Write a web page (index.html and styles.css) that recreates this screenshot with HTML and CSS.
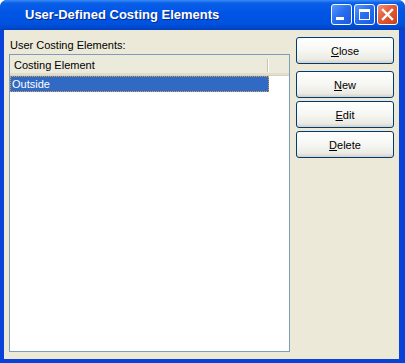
FILE: index.html
```html
<!DOCTYPE html>
<html lang="en">
<head>
    <meta charset="UTF-8">
    <title>User-Defined Costing Elements</title>
    <link rel="stylesheet" href="styles.css">
</head>
<body>
    <div class="window">
        <div class="titlebar">
            <div class="title">User-Defined Costing Elements</div>
            <div class="controls">
                <div class="ctl ctl-min"><span class="min-bar"></span></div>
                <div class="ctl ctl-max"><span class="max-box"></span></div>
                <div class="ctl ctl-close">
                    <svg width="13" height="13" viewBox="0 0 13 13">
                        <path d="M2 2 L11 11 M11 2 L2 11" stroke="#fff" stroke-width="2.4" stroke-linecap="square"/>
                    </svg>
                </div>
            </div>
        </div>

        <div class="content">
            <div class="left">
                <div class="label">User Costing Elements:</div>
                <div class="listbox">
                    <div class="header">
                        <div class="col">Costing Element</div>
                        <div class="col-rest"></div>
                    </div>
                    <div class="row selected">Outside</div>
                </div>
            </div>
            <div class="buttons">
                <button class="btn btn-first"><u>C</u>lose</button>
                <button class="btn"><u>N</u>ew</button>
                <button class="btn"><u>E</u>dit</button>
                <button class="btn"><u>D</u>elete</button>
            </div>
        </div>
    </div>
</body>
</html>
```

FILE: styles.css
```css
* {
    margin: 0;
    padding: 0;
    box-sizing: border-box;
}

body {
    width: 405px;
    height: 363px;
    background: #fff;
    font-family: "Liberation Sans", Arial, sans-serif;
    font-size: 11px;
    overflow: hidden;
}

.window {
    width: 405px;
    height: 363px;
    display: flex;
    flex-direction: column;
    background: #0842d8;
    border-radius: 7px 7px 0 0;
    overflow: hidden;
}

.titlebar {
    height: 30px;
    flex: none;
    display: flex;
    align-items: center;
    justify-content: space-between;
    padding: 0 7px 0 25px;
    background: linear-gradient(to bottom, #3b8cf5 0, #0a5fe8 3px, #0055e6 12px, #0052de 24px, #0048cc 28px, #0040b8 30px);
}

.title {
    color: #fff;
    font-family: "Liberation Sans", Arial, sans-serif;
    font-weight: bold;
    font-size: 13px;
    text-shadow: 1px 1px 0 #0a2a8a;
    padding-bottom: 2px;
}

.controls {
    display: flex;
    gap: 2px;
    padding-bottom: 1px;
}

.ctl {
    width: 21px;
    height: 21px;
    border: 1px solid #fff;
    border-radius: 3px;
    display: flex;
    align-items: center;
    justify-content: center;
    background: linear-gradient(135deg, #5a97ff 0%, #2a6ff0 45%, #1a58e0 100%);
}

.ctl-close {
    background: linear-gradient(135deg, #f0917a 0%, #e35a36 45%, #c8401c 100%);
}

.min-bar {
    width: 8px;
    height: 3px;
    background: #fff;
    margin-top: 8px;
    margin-right: 4px;
}

.max-box {
    width: 11px;
    height: 11px;
    border: 1px solid #fff;
    border-top-width: 3px;
}

.content {
    flex: 1;
    display: flex;
    gap: 6px;
    margin: 0 6px 4px 4px;
    background: #ece9d8;
    padding: 7px 5px 7px 5px;
}

.left {
    flex: 1;
    display: flex;
    flex-direction: column;
}

.label {
    height: 17px;
    padding: 2px 0 0 1px;
    color: #000;
}

.listbox {
    flex: 1;
    background: #fff;
    border: 1px solid #7f9db9;
}

.header {
    height: 21px;
    display: flex;
    background: #ebeadb;
    border-bottom: 1px solid #d6d2c2;
    box-shadow: inset 0 -2px 0 #e2decd;
}

.col {
    width: 259px;
    padding: 4px 0 0 4px;
    position: relative;
    color: #000;
}

.col::after {
    content: '';
    position: absolute;
    right: 0;
    top: 4px;
    height: 13px;
    border-left: 1px solid #c7c5b2;
    border-right: 1px solid #fff;
}

.col-rest {
    flex: 1;
}

.row {
    width: 259px;
    height: 16px;
    line-height: 14px;
    padding-left: 1px;
    color: #000;
}

.selected {
    background: #316ac5;
    color: #fff;
    border: 1px dotted #e0a040;
}

.buttons {
    width: 98px;
    display: flex;
    flex-direction: column;
    gap: 3px;
}

.btn {
    height: 27px;
    font-family: "Liberation Sans", Arial, sans-serif;
    font-size: 11px;
    color: #000;
    border: 1px solid #003c74;
    border-radius: 3px;
    background: linear-gradient(to bottom, #ffffff 0%, #f6f6f2 50%, #ecebe6 85%, #d6d0c5 100%);
}

.btn-first {
    margin-bottom: 4px;
}
```
